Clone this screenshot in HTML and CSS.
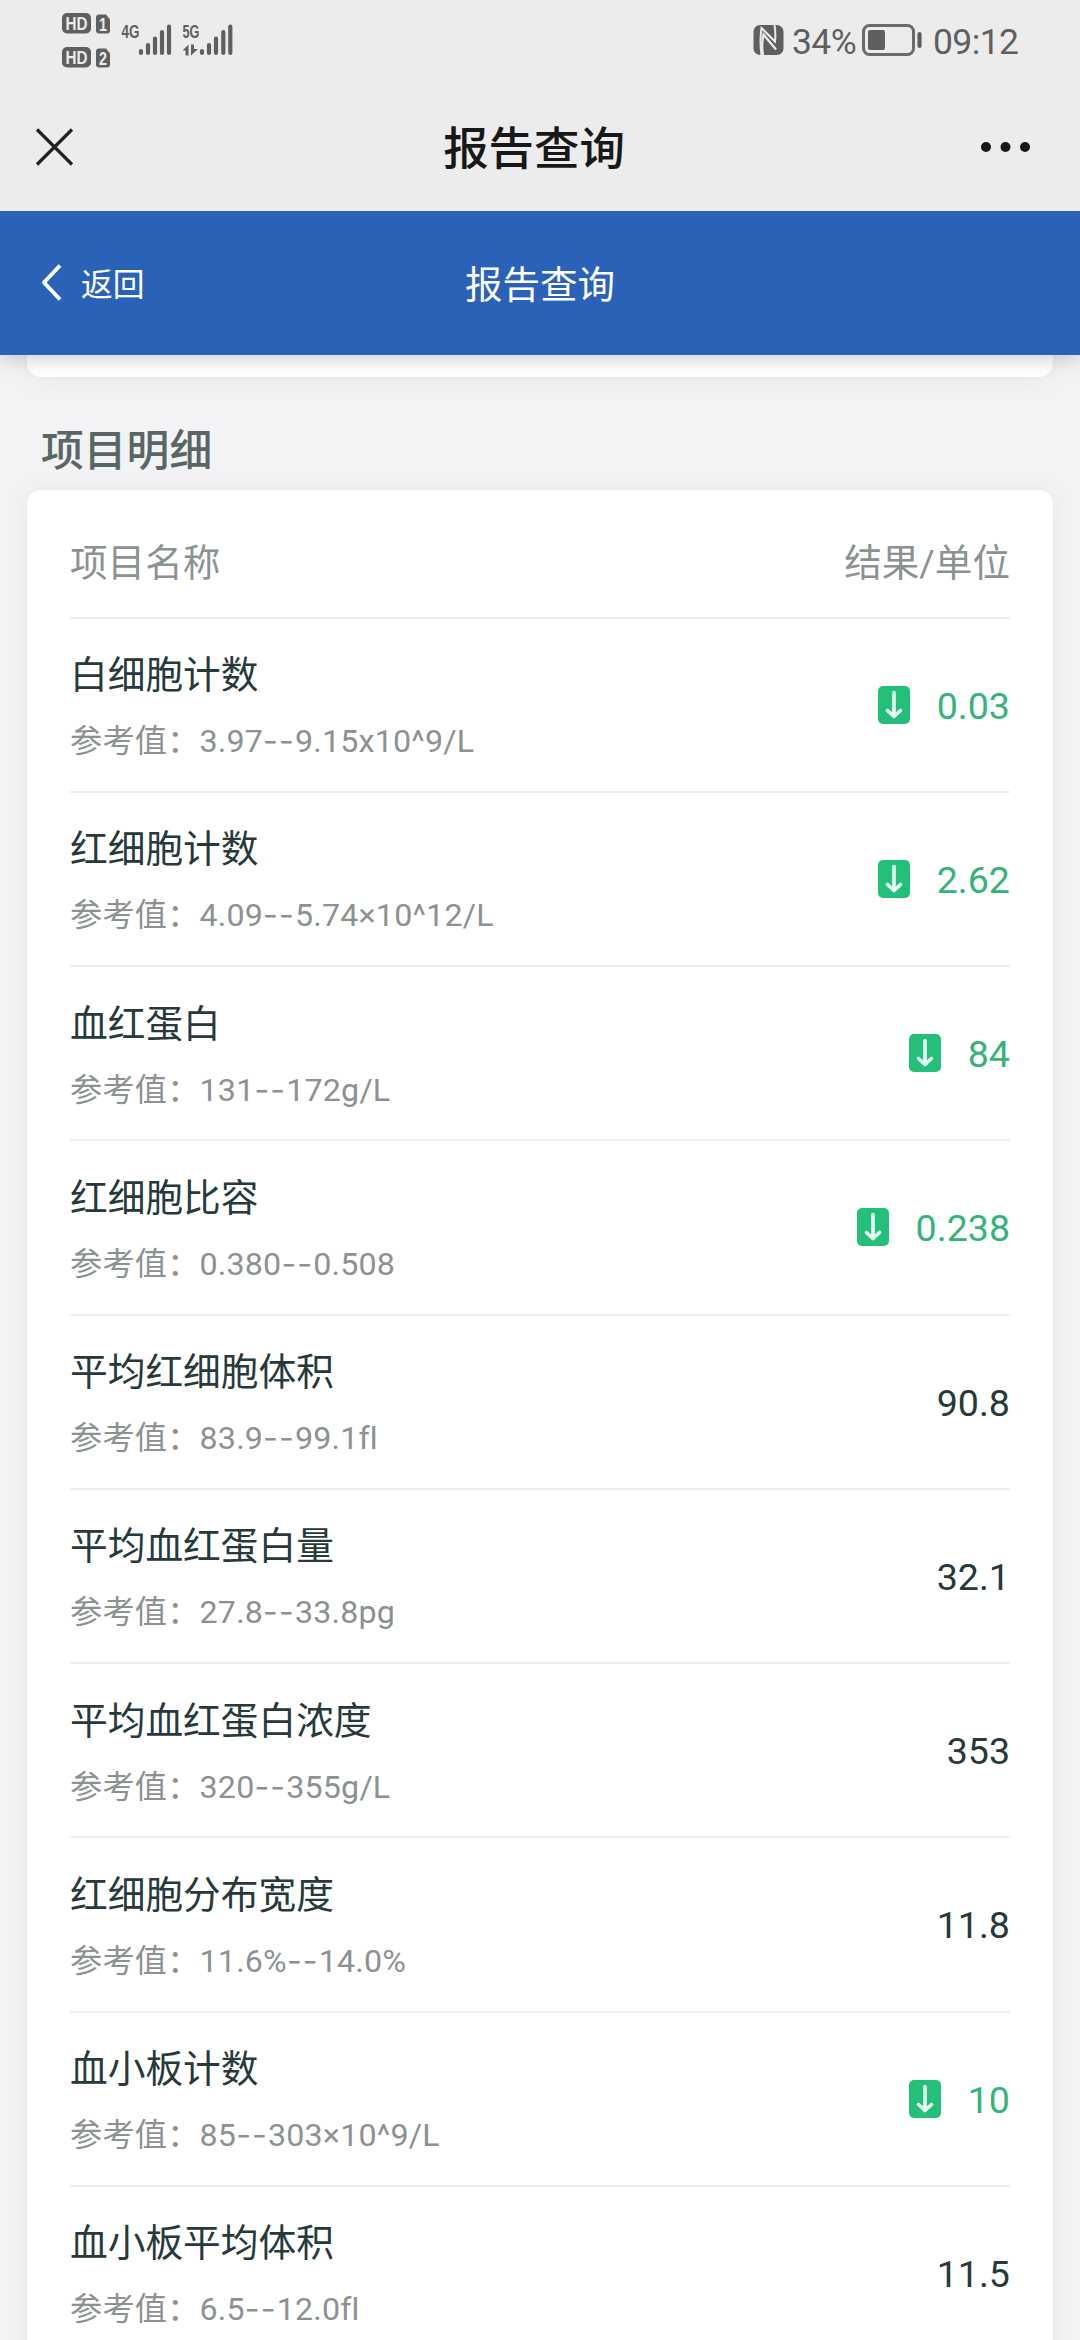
FILE: index.html
```html
<!DOCTYPE html>
<html lang="zh-CN">
<head>
<meta charset="utf-8">
<title>报告查询</title>
<link rel="stylesheet" href="styles.css">
</head>
<body>
<svg class="defs" width="0" height="0" aria-hidden="true">
  <symbol id="down" viewBox="0 0 32 38">
    <rect width="32" height="38" rx="5" fill="#24c079"/>
    <path d="M16 6.500V30M9.500 24.500L16 30.500L22.500 24.500" fill="none" stroke="#e9fff3" stroke-width="3.600" stroke-linecap="round" stroke-linejoin="round"/>
  </symbol>
</svg>
<div class="screen">
  <div class="status">
    <svg class="signals" width="180" height="80" viewBox="60 0 180 80">
      <g fill="#5f5f5f">
        <rect x="62" y="13" width="29" height="20.500" rx="5"/>
        <rect x="62" y="47" width="29" height="20.500" rx="5"/>
        <path d="M99 14.500h7l4 5v11a3 3 0 0 1-3 3h-8a3 3 0 0 1-3-3v-13a3 3 0 0 1 3-3z"/>
        <path d="M99 48.500h7l4 5v11a3 3 0 0 1-3 3h-8a3 3 0 0 1-3-3v-13a3 3 0 0 1 3-3z"/>
      </g>
      <g class="badge-text">
        <text x="65.500" y="30" textLength="22" lengthAdjust="spacingAndGlyphs">HD</text>
        <text x="65.500" y="64" textLength="22" lengthAdjust="spacingAndGlyphs">HD</text>
        <text x="99" y="30.500" textLength="8" lengthAdjust="spacingAndGlyphs">1</text>
        <text x="99" y="64.500" textLength="8" lengthAdjust="spacingAndGlyphs">2</text>
      </g>
      <g class="net-text">
        <text x="121.500" y="38" textLength="18" lengthAdjust="spacingAndGlyphs">4G</text>
        <text x="182.500" y="38" textLength="17" lengthAdjust="spacingAndGlyphs">5G</text>
      </g>
      <g stroke="#5f5f5f" stroke-width="4.200" stroke-linecap="round">
        <path d="M141 51.200v1.800M148 45v8M155 38.500v14.500M162 32v21M169 26.500v26.500"/>
        <path d="M202 51.200v1.800M209 45v8M216 38.500v14.500M223.300 32v21M230.300 26.500v26.500"/>
      </g>
      <path d="M182.500 50.500l6-6v11h-3v-5zM191 44.500h3v4.500h4l-7 6.500z" fill="#5f5f5f"/>
    </svg>
    <div class="status-right">
      <svg class="nfc" width="32" height="32" viewBox="0 0 32 32">
        <rect x="0.500" y="1" width="30" height="30" rx="6.500" fill="#5f5f5f"/>
        <path d="M8.500 31C7.200 22 7.300 12 8.500 4L22 17.500C22.800 11 22.300 6 21.500 1" fill="none" stroke="#ececec" stroke-width="2"/>
        <path d="M10 31C9 25 9 17 10.500 10.500L23 25.500" fill="none" stroke="#ececec" stroke-width="2.200"/>
      </svg>
      <span class="percent">34%</span>
      <svg class="battery" width="62" height="34" viewBox="0 0 62 34">
        <rect x="2.500" y="2.500" width="50" height="29" rx="6" fill="none" stroke="#6a6a6a" stroke-width="3"/>
        <rect x="7" y="7" width="17" height="20" rx="2" fill="#5f5f5f"/>
        <path d="M58.500 11v12" stroke="#5f5f5f" stroke-width="4.200" stroke-linecap="round"/>
      </svg>
      <span class="time">09:12</span>
    </div>
  </div>

  <div class="appbar">
    <svg width="44" height="44" viewBox="0 0 44 44"><path d="M5 4.500L40 39.500M40 4.500L5 39.500" fill="none" stroke="#222" stroke-width="3.200"/></svg>
    <h1 class="app-title">报告查询</h1>
    <svg width="54" height="16" viewBox="0 0 54 16" fill="#181818"><circle cx="8" cy="8" r="5"/><circle cx="27.500" cy="8" r="5"/><circle cx="47" cy="8" r="5"/></svg>
  </div>

  <div class="navbar">
    <div class="back">
      <svg width="24" height="42" viewBox="0 0 24 42"><path d="M20 1.500L4 18.500L20 35.500" fill="none" stroke="#fff" stroke-width="4" stroke-linejoin="round"/></svg>
      <span>返回</span>
    </div>
    <h2 class="nav-title">报告查询</h2>
    <div></div>
  </div>

  <main class="content">
    <div class="card card-prev"></div>
    <h3 class="section">项目明细</h3>
    <div class="card list">
      <div class="head"><span>项目名称</span><span>结果/单位</span></div>
      <div class="row"><div><div class="name">白细胞计数</div><div class="ref">参考值：3.97<i>--</i>9.15x10^9/L</div></div><div class="value low"><svg class="arrow"><use href="#down"/></svg><span>0.03</span></div></div>
      <div class="row"><div><div class="name">红细胞计数</div><div class="ref">参考值：4.09<i>--</i>5.74×10^12/L</div></div><div class="value low"><svg class="arrow"><use href="#down"/></svg><span>2.62</span></div></div>
      <div class="row"><div><div class="name">血红蛋白</div><div class="ref">参考值：131<i>--</i>172g/L</div></div><div class="value low"><svg class="arrow"><use href="#down"/></svg><span>84</span></div></div>
      <div class="row"><div><div class="name">红细胞比容</div><div class="ref">参考值：0.380<i>--</i>0.508</div></div><div class="value low"><svg class="arrow"><use href="#down"/></svg><span>0.238</span></div></div>
      <div class="row"><div><div class="name">平均红细胞体积</div><div class="ref">参考值：83.9<i>--</i>99.1fl</div></div><div class="value"><span>90.8</span></div></div>
      <div class="row"><div><div class="name">平均血红蛋白量</div><div class="ref">参考值：27.8<i>--</i>33.8pg</div></div><div class="value"><span>32.1</span></div></div>
      <div class="row"><div><div class="name">平均血红蛋白浓度</div><div class="ref">参考值：320<i>--</i>355g/L</div></div><div class="value"><span>353</span></div></div>
      <div class="row"><div><div class="name">红细胞分布宽度</div><div class="ref">参考值：11.6%<i>--</i>14.0%</div></div><div class="value"><span>11.8</span></div></div>
      <div class="row"><div><div class="name">血小板计数</div><div class="ref">参考值：85<i>--</i>303×10^9/L</div></div><div class="value low"><svg class="arrow"><use href="#down"/></svg><span>10</span></div></div>
      <div class="row"><div><div class="name">血小板平均体积</div><div class="ref">参考值：6.5<i>--</i>12.0fl</div></div><div class="value"><span>11.5</span></div></div>
    </div>
  </main>
</div>
</body>
</html>
```
FILE: styles.css
```css
* { box-sizing: border-box; }

html, body { margin: 0; }

body {
  font-family: Roboto, "Noto Sans CJK SC", sans-serif;
  font-variant-ligatures: none;
  background: #f3f3f6;
}

h1, h2, h3 { margin: 0; font-weight: 400; }
svg { display: block; flex: none; }
.defs { position: absolute; }

.screen {
  width: 1080px;
  height: 2340px;
  overflow: hidden;
  display: flex;
  flex-direction: column;
}

/* System status bar */
.status {
  height: 80px;
  flex: none;
  padding: 0 61px 0 60px;
  display: flex;
  justify-content: space-between;
  background: #ececec;
  color: #5f5f5f;
}
.badge-text {
  font: 700 19px "Liberation Sans", sans-serif;
  fill: #ececec;
}
.net-text {
  font: 700 19px "Liberation Sans", sans-serif;
  fill: #5f5f5f;
}
.status-right {
  display: flex;
  align-items: center;
  height: 80px;
  font-size: 35.500px;
  line-height: 44px;
}
.percent { margin: 3px 0 0 7px; width: 69px; letter-spacing: -0.600px; }
.time { width: 86px; margin: 3px 0 0 10px; letter-spacing: -0.600px; }

/* Host app bar */
.appbar {
  height: 131px;
  flex: none;
  padding: 3px 48px 0 32px;
  display: grid;
  grid-template-columns: 1fr auto 1fr;
  background: #ececec;
  align-items: start;
  position: relative;
  z-index: 1;
}
.appbar > svg { margin-top: 42px; }
.appbar > svg:last-child { justify-self: end; margin-top: 56px; }
.app-title {
  margin-top: 37px;
  padding-left: 4px;
  font-size: 45.400px;
  line-height: 60px;
  font-weight: 500;
  color: #181818;
  transform: translateX(0);
}

/* Page navigation */
.navbar {
  height: 144px;
  flex: none;
  padding: 4px 40px 0;
  display: grid;
  grid-template-columns: 1fr auto 1fr;
  align-items: center;
  background: #2a62b7;
  color: #fff;
  position: relative;
  box-shadow: 0 2px 20px rgba(0, 0, 0, 0.22);
}
.back {
  display: flex;
  align-items: center;
  gap: 17px;
  font-size: 31.800px;
  line-height: 44px;
}
.nav-title { font-size: 37.500px; line-height: 50px; }

.content { padding: 0 27px; flex: 1; min-height: 0; }
.card {
  background: #fff;
  box-shadow: 0 2px 26px rgba(0, 0, 0, 0.06);
}
.card-prev { height: 22px; border-radius: 0 0 14px 14px; }
.section {
  padding: 44px 14px 9px;
  font-size: 42.800px;
  line-height: 60px;
  font-weight: 500;
  color: #5a6666;
}
.list {
  border-radius: 14px;
  padding: 0 43px;
  height: 1900px;
}
.head {
  height: 128.600px;
  padding-top: 19px;
  display: flex;
  justify-content: space-between;
  align-items: center;
  font-size: 37.600px;
  line-height: 50px;
  color: #8c9291;
  border-bottom: 2px solid #eee;
}
.row {
  height: 174.260px;
  padding-top: 4px;
  display: flex;
  justify-content: space-between;
  align-items: center;
  border-bottom: 2px solid #eee;
}
.name {
  font-size: 37.700px;
  line-height: 50px;
  color: #26393b;
}
.ref {
  margin-top: 19px;
  font-size: 32.200px;
  line-height: 44px;
  letter-spacing: 0.200px;
  color: #8c9291;
}
.ref i {
  font-family: Inter, sans-serif;
  font-style: normal;
  letter-spacing: 1.100px;
}
.value {
  display: flex;
  align-items: center;
  gap: 27px;
  font-size: 37.600px;
  line-height: 50px;
  margin-bottom: 2px;
  color: #26393b;
}
.value.low { color: #36b37c; }
.arrow { width: 32px; height: 38px; margin-bottom: 2px; }
```
